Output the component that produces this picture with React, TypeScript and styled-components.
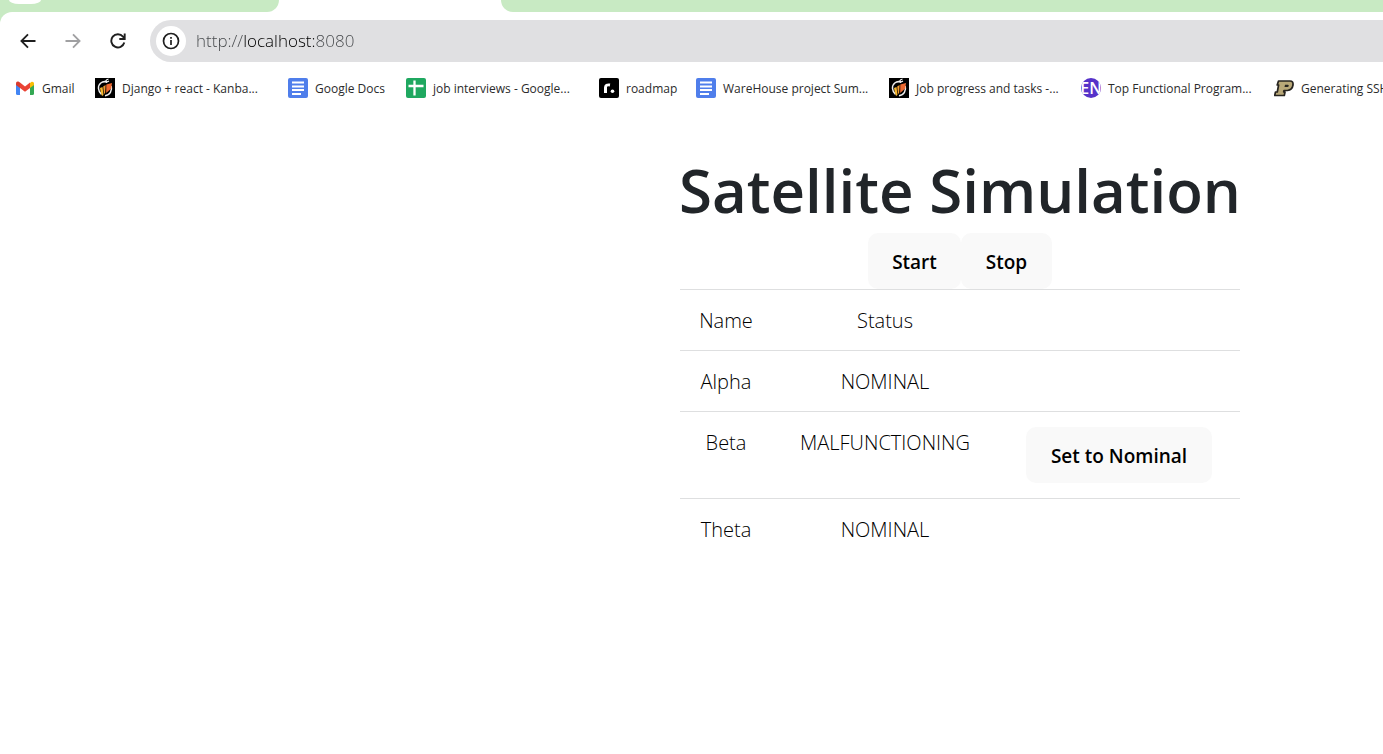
import React from "react";
import styled, { createGlobalStyle } from "styled-components";

const GlobalStyle = createGlobalStyle`
  * { box-sizing: border-box; }
  body {
    margin: 0;
    background: #fff;
    color: #212529;
    font-family: "Open Sans", "Noto Sans", sans-serif;
    overflow-x: hidden;
  }
`;

const TabStrip = styled.div`
  display: flex;
  height: 12px;
  background: #fff;
`;

const StripStart = styled.div`
  width: 279px;
  padding-left: 9px;
  background: #c8eac3;
  border-bottom-right-radius: 12px;
`;

const StripButton = styled.button`
  display: block;
  width: 32px;
  height: 4px;
  padding: 0;
  border: 0;
  background: #fff;
  border-radius: 0 0 10px 10px / 0 0 4px 4px;
`;

const ActiveTab = styled.div`
  width: 222px;
`;

const StripEnd = styled.div`
  flex: 1;
  background: #c8eac3;
  border-bottom-left-radius: 14px;
`;

const ToolbarBack = styled.header`
  background: #c8eac3;
`;

const Toolbar = styled.div`
  display: flex;
  align-items: center;
  padding: 8px 0 0 5px;
  background: #fff;
  border-top-left-radius: 12px;
`;

const NavButton = styled.button`
  display: flex;
  align-items: center;
  justify-content: center;
  width: 45px;
  height: 42px;
  padding: 0;
  border: 0;
  background: none;
  color: ${(p) => (p.disabled ? "#a0a0a2" : "#1f1f1f")};
`;

const AddressBar = styled.form`
  display: flex;
  align-items: center;
  flex: 1;
  height: 42px;
  margin-left: 10px;
  padding-left: 6px;
  gap: 10px;
  background: #e0e0e2;
  border-radius: 21px 0 0 21px;
`;

const InfoButton = styled.button`
  display: flex;
  align-items: center;
  justify-content: center;
  width: 30px;
  height: 30px;
  padding: 0;
  border: 0;
  border-radius: 50%;
  background: #fff;
  color: #1f1f1f;
`;

const AddressInput = styled.input`
  flex: 1;
  min-width: 0;
  height: 30px;
  padding: 0;
  border: 0;
  outline: 0;
  font: 300 17px/30px "Open Sans", "Noto Sans", sans-serif;
  color: #44474a;
  background: linear-gradient(90deg, #44474a 47px, #000 47px, #000 118px, #44474a 118px);
  background-clip: text;
  -webkit-background-clip: text;
  -webkit-text-fill-color: transparent;
`;

const Bookmarks = styled.nav`
  display: flex;
  gap: 20px;
  padding: 16px 0 0 15px;
  overflow: hidden;
`;

const Bookmark = styled.a`
  display: flex;
  align-items: center;
  flex: none;
  gap: 7px;
  height: 20px;
  color: #2b2b2b;
  font-size: 12px;
  line-height: 20px;
  white-space: nowrap;
  text-decoration: none;
  svg { display: block; flex: none; }
`;

const BookmarkLabel = styled.span<{ $width: number }>`
  width: ${(p) => p.$width}px;
  padding-top: 2px;
`;

const Page = styled.main`
  display: flex;
  justify-content: flex-end;
  padding: 59px 143px 40px 0;
`;

const Panel = styled.section`
  width: 560px;
  text-align: center;
`;

const Title = styled.h1`
  display: flex;
  justify-content: center;
  margin: 0 0 10px;
  font-size: 60px;
  font-weight: 600;
  line-height: 66px;
  white-space: nowrap;
`;

const Actions = styled.div`
  display: flex;
  justify-content: center;
`;

const ActionButton = styled.button<{ $width: number }>`
  width: ${(p) => p.$width}px;
  height: 56px;
  padding: 2px 0 0;
  border: 0;
  border-radius: 10px;
  background: #f9f9f9;
  color: #000;
  font: 600 19px/28px "Open Sans", "Noto Sans", sans-serif;
  white-space: nowrap;
`;

const StatusTable = styled.table`
  width: 100%;
  table-layout: fixed;
  border-collapse: separate;
  border-spacing: 0;
  font-size: 20px;
  line-height: 32px;
`;

const Col = styled.col<{ $width: number }>`
  width: ${(p) => p.$width}px;
`;

const Cell = styled.td`
  padding: 15px 0 13px;
  border-top: 1px solid #dedfe0;
  color: #000;
  font-weight: 300;
  vertical-align: top;
  white-space: nowrap;
`;

const CellButton = styled(ActionButton)`
  display: block;
  margin: 0 auto 2px;
`;

const Gmail = () => (
  <svg width="20" height="20" viewBox="0 0 20 20">
    <path d="M1 5v10.500q0 1.500 1.500 1.500H5V9z" fill="#4285f4" />
    <path d="M15 17h2.500q1.500 0 1.500-1.500V5l-4 4z" fill="#34a853" />
    <path d="M15 5v5l4-3V5.500q0-2-2.300-1.700z" fill="#fbbc04" />
    <path d="M5 10V4.600l5 3.900 5-3.900V10l-5 3.800z" fill="#ea4335" />
    <path d="M1 5.500Q1 3 3.300 3.500L5 4.600V10L1 7z" fill="#d93a2c" />
  </svg>
);

const Docs = () => (
  <svg width="20" height="20" viewBox="0 0 20 20">
    <rect width="20" height="20" rx="2" fill="#4f7eeb" />
    <path d="M4 4.500h12M4 8.500h12M4 12h12M4 16h9" stroke="#fff" strokeWidth="2" />
  </svg>
);

const Sheets = () => (
  <svg width="20" height="20" viewBox="0 0 20 20">
    <rect width="20" height="20" rx="2" fill="#1fa860" />
    <path d="M8.500 2.500v15M2.500 8h15" stroke="#fff" strokeWidth="2.300" />
  </svg>
);

const Kanban = () => (
  <svg width="20" height="20" viewBox="0 0 20 20">
    <rect width="20" height="20" fill="#000" />
    <path d="M12 4C7 2.500 3.200 6 3.500 10.500c.2 2.700 1.500 4.600 3 5.800M16.200 8c1.200 4.500-1.200 9.200-6.200 9.700" fill="none" stroke="#eee" strokeWidth="1.500" />
    <path d="M10.500 3.500q.5-2 3-2.500M11 4.500l3-1.500" stroke="#fff" strokeWidth="1.200" fill="none" />
    <path d="M5 10l2.500-1 1 8-1.500 1q-1.500-4-2-8z" fill="#f5b72d" />
    <path d="M8.200 8.500l2.400-1.500-.5 8L9 16z" fill="#f39a30" />
    <path d="M11.300 6.500L17 5l-.8 5.500-5 4.500z" fill="#ee6930" />
  </svg>
);

const Roadmap = () => (
  <svg width="20" height="20" viewBox="0 0 20 20">
    <rect width="20" height="20" rx="2" fill="#000" />
    <path d="M6.500 15V9.500Q6.500 6.300 11 7" fill="none" stroke="#fff" strokeWidth="3" />
    <circle cx="13.500" cy="13.200" r="1.800" fill="#fff" />
  </svg>
);

const CircleBadge = styled.span`
  display: flex;
  align-items: center;
  justify-content: center;
  width: 20px;
  height: 20px;
  border-radius: 50%;
  overflow: hidden;
  background: #5632c9;
  color: #fff;
  font: 600 16px/20px "Open Sans", "Noto Sans", sans-serif;
`;

const Engati = () => <CircleBadge aria-hidden="true">EN</CircleBadge>;

const Purdue = () => (
  <svg width="20" height="20" viewBox="0 0 20 20">
    <path d="M4.500 3H16q3.500 0 3 4-.8 5-5.500 5.500H10L9.700 14H11l-.7 3.500H.7L1.500 14H3.300l1.300-7H3.200z" fill="#b9a878" stroke="#27241f" strokeWidth="1.700" strokeLinejoin="round" />
    <path d="M11 6.700h3q1 .2.700 1.300-.2 1-1.200 1h-3z" fill="#27241f" />
  </svg>
);

const bookmarks = [
  { label: "Gmail", width: 33, Icon: Gmail },
  { label: "Django + react - Kanba...", width: 146, Icon: Kanban },
  { label: "Google Docs", width: 71, Icon: Docs },
  { label: "job interviews - Google...", width: 146, Icon: Sheets },
  { label: "roadmap", width: 50, Icon: Roadmap },
  { label: "WareHouse project Sum...", width: 146, Icon: Docs },
  { label: "Job progress and tasks -...", width: 145, Icon: Kanban },
  { label: "Top Functional Program...", width: 146, Icon: Engati },
  { label: "Generating SSH", width: 146, Icon: Purdue },
];

const satellites = [
  { name: "Alpha", status: "NOMINAL" },
  { name: "Beta", status: "MALFUNCTIONING" },
  { name: "Theta", status: "NOMINAL" },
];

export default function App() {
  return (
    <>
      <GlobalStyle />
      <TabStrip>
        <StripStart>
          <StripButton type="button" aria-label="Search tabs" />
        </StripStart>
        <ActiveTab />
        <StripEnd />
      </TabStrip>
      <ToolbarBack>
        <Toolbar>
          <NavButton type="button" aria-label="Back">
            <svg width="16" height="16" viewBox="0 0 16 16" fill="none" stroke="currentColor" strokeWidth="1.800">
              <path d="M15.500 8H2M8 1.300L1.400 8 8 14.700" />
            </svg>
          </NavButton>
          <NavButton type="button" aria-label="Forward" disabled>
            <svg width="16" height="16" viewBox="0 0 16 16" fill="none" stroke="currentColor" strokeWidth="1.800">
              <path d="M.5 8H14M8 1.300L14.600 8 8 14.700" />
            </svg>
          </NavButton>
          <NavButton type="button" aria-label="Reload">
            <svg width="16" height="16" viewBox="0 0 16 16" fill="none" stroke="currentColor" strokeWidth="1.900">
              <path d="M14.300 9.500A6.600 6.600 0 1 1 13 3.600L14.500 5.500M14.700.5V6H9.300" />
            </svg>
          </NavButton>
          <AddressBar onSubmit={(e) => e.preventDefault()}>
            <InfoButton type="button" aria-label="View site information">
              <svg width="18" height="18" viewBox="0 0 18 18" fill="none" stroke="currentColor" strokeWidth="1.700">
                <circle cx="9" cy="9" r="7.500" />
                <path d="M9 8v5M9 5v1.800" />
              </svg>
            </InfoButton>
            <AddressInput aria-label="Address" defaultValue="http://localhost:8080" spellCheck={false} />
          </AddressBar>
        </Toolbar>
      </ToolbarBack>
      <Bookmarks aria-label="Bookmarks">
        {bookmarks.map(({ label, width, Icon }) => (
          <Bookmark href="#" key={label}>
            <Icon />
            <BookmarkLabel $width={width}>{label}</BookmarkLabel>
          </Bookmark>
        ))}
      </Bookmarks>
      <Page>
        <Panel>
          <Title>Satellite Simulation</Title>
          <Actions>
            <ActionButton type="button" $width={93}>Start</ActionButton>
            <ActionButton type="button" $width={91}>Stop</ActionButton>
          </Actions>
          <StatusTable>
            <colgroup>
              <Col $width={92} />
              <Col $width={226} />
              <Col $width={242} />
            </colgroup>
            <thead>
              <tr>
                <Cell as="th" scope="col">Name</Cell>
                <Cell as="th" scope="col">Status</Cell>
                <Cell />
              </tr>
            </thead>
            <tbody>
              {satellites.map(({ name, status }) => (
                <tr key={name}>
                  <Cell>{name}</Cell>
                  <Cell>{status}</Cell>
                  <Cell>
                    {status === "MALFUNCTIONING" && (
                      <CellButton type="button" $width={186}>Set to Nominal</CellButton>
                    )}
                  </Cell>
                </tr>
              ))}
            </tbody>
          </StatusTable>
        </Panel>
      </Page>
    </>
  );
}
